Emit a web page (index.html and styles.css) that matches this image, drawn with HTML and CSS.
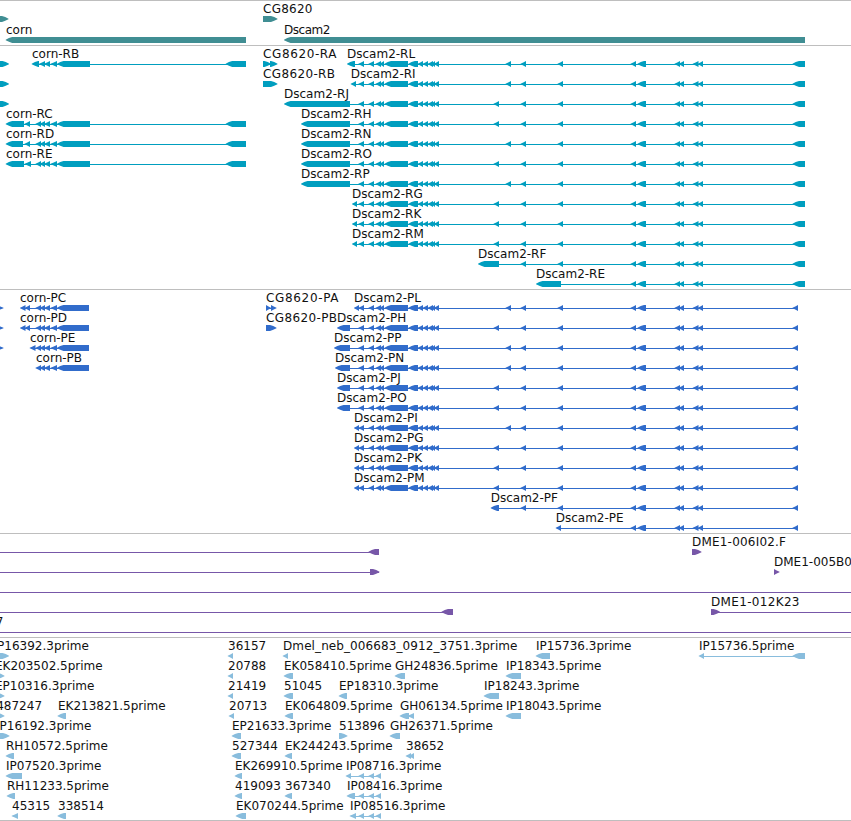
FILE: index.html
```html
<!DOCTYPE html>
<html lang="en">
<head>
<meta charset="utf-8">
<title>Genome browser</title>
<link rel="stylesheet" href="styles.css">
</head>
<body>
<main class="browser">
<section class="track track-gene" id="gene"></section>
<section class="track track-transcript" id="transcript"></section>
<section class="track track-protein" id="protein"></section>
<section class="track track-bac" id="bac"></section>
<section class="track track-est" id="est"></section>
</main>
<script src="tracks.js"></script>
</body>
</html>
```
FILE: styles.css
```css
body {
  margin: 0;
  background: #fff;
  overflow: hidden;
}

.browser {
  display: flex;
  flex-direction: column;
  width: 851px;
  box-sizing: border-box;
  border-bottom: 1px solid #bebebe;
}

.track {
  box-sizing: border-box;
  border-top: 1px solid #bebebe;
  overflow: hidden;
}

.track svg {
  display: block;
  width: 851px;
  height: 100%;
}

.track text {
  font-family: "DejaVu Sans", sans-serif;
  font-size: 12px;
  fill: #111;
}

.track-gene { height: 45px; color: #408e93; }
.track-transcript { height: 244px; color: #009ebf; }
.track-protein { height: 244px; color: #316ccb; }
.track-bac { height: 104px; color: #7757a8; }
.track-est { height: 183px; color: #89bddd; }

.exon { fill: currentColor; }
.intron { fill: currentColor; shape-rendering: crispEdges; }
```
FILE: tracks.js
```js
// Feature: [row, label, label x, exons, direction, span]
// Exons are [start, end] pairs; the span overrides the line's extent.
const NS = "http://www.w3.org/2000/svg";
const core = [[358.3,364],[368.4,374],[375.5,381],[379.5,384],[384.5,408],[408.3,418],[417.5,423],[422.5,428],[427.5,433],[431,435],[433.8,439]];
const A = [505.5,511], B = [493.5,499];
const mid = [[520.5,526],[557.5,563]];
const tail = [[630.5,636],[637.5,646],[674.5,680],[678.5,684],[692.7,698.5],[697.7,703]];
const endR = [792.5,805], endP = [792.5,798];
const dscam = (first, variant, last) => [first, ...core, variant, ...mid, ...tail, last];
const cornMid = [[35.5,41],[39.5,45],[44,50],[50.5,57],[57,90]];
const cornP = [...cornMid.slice(0,4),[57,89]];
const ip = [[358.5,364],[368.5,374],[375.5,381]];

const transcripts = [
  [0,"",0,[[-6,9]],"r"],[1,"",0,[[-6,9]],"r"],[2,"",0,[[-6,9]],"r"],
  [0,"corn-RB",32,[[31.7,39],[39,45],[44,50],[50.5,57],[57,90],[225.7,246]]],
  [3,"corn-RC",6,[[5.7,24],[24.5,30],...cornMid,[225.7,246]]],
  [4,"corn-RD",6,[[5.7,23],[24.5,30],...cornMid,[225.7,246]]],
  [5,"corn-RE",6,[[5.7,24],[24.5,31],...cornMid,[225.7,246]]],
  [0,"CG8620-RA",263,[[263,271],[270,277.5]],"r"],
  [1,"CG8620-RB",263,[[263,277.5]],"r"],
  [10,"Dscam2-RF",478,[[478,499],...mid,...tail,endR]],
  [11,"Dscam2-RE",536,[[536,561],...tail,endR]]
];
[["RL",347,355,A],["RI",350.7,356,A],["RJ",284,350,B],["RH",301,350,B],["RN",301,350,A],["RO",301,350,B],["RP",301,350,A],["RG",352,357,B],["RK",352,357,B],["RM",352,357,B]]
  .forEach(([n,s,e,v],i) => transcripts.push([i,"Dscam2-"+n,s,dscam([s,e],v,endR)]));

const proteins = [
  [0,"",0,[[-3,3.5]],"r"],[1,"",0,[[-3,3.5]],"r"],[2,"",0,[[-3,3.5]],"r"],
  [0,"corn-PC",20,[[20,25.5],[24.7,30],...cornP]],
  [1,"corn-PD",20,[[20,25.5],[24.7,30],...cornP]],
  [2,"corn-PE",30,[[29.7,35.5],...cornP]],
  [3,"corn-PB",36,cornP],
  [0,"CG8620-PA",266,[[266,271],[271,276.5]],"r"],
  [1,"CG8620-PB",266,[[266,276.5]],"r"],
  [10,"Dscam2-PF",490.7,[[490.7,499],...mid,...tail,endP]],
  [11,"Dscam2-PE",555.7,[[555.7,561],...tail,endP]]
];
[["PL",354,359,A],["PH",337,350,B],["PP",334,350,A],["PN",335,350,A],["PJ",337,350,B],["PO",337,350,B],["PI",354,359,A],["PG",354,359,B],["PK",354,359,B],["PM",354,359,B]]
  .forEach(([n,s,e,v],i) => proteins.push([i,"Dscam2-"+n,s,dscam([s,e],v,endP)]));

const tracks = {
  gene: [
    [0,"",0,[[-6,8.5]],"r"],
    [1,"corn",6,[[5.7,246]]],
    [0,"CG8620",263,[[263,277.5]],"r"],
    [1,"Dscam2",284,[[284,805]]]
  ],
  transcript: transcripts,
  protein: proteins,
  bac: [
    [0,"",0,[[368.5,379]],"l",[0,379]],
    [1,"",0,[[370,379.5]],"r",[0,379]],
    [2,"",0,[],"l",[0,851]],
    [3,"",0,[[441.5,453]],"l",[0,453]],
    [4,"7",-4.3,[],"l",[0,851]],
    [0,"DME1-006I02.F",692,[[692,701.5]],"r"],
    [1,"DME1-005B04",774,[[774,779.5]],"r"],
    [3,"DME1-012K23",711,[[711,720]],"r",[711,851]]
  ],
  est: [
    [0,"IP16392.3prime",-6.5,[[-6,9]],"r"],
    [0,"36157",228,[[227.7,233]]],
    [0,"Dmel_neb_006683_0912_3751.3prime",283,[[282.7,288]]],
    [0,"IP15736.3prime",536,[[535.7,550]]],
    [0,"IP15736.5prime",699,[[698.7,704],[792.5,805]]],
    [1,"EK203502.5prime",-5,[[-3,4.5]],"r"],
    [1,"20788",228,[[227.7,233]]],
    [1,"EK058410.5prime",284,[[283.7,293]]],
    [1,"GH24836.5prime",395,[[394.7,405]]],
    [1,"IP18343.5prime",506,[[505.7,521]]],
    [2,"EP10316.3prime",-5,[[-3,4.5]],"r"],
    [2,"21419",228,[[227.7,233]]],
    [2,"51045",284,[[283.7,293]]],
    [2,"EP18310.3prime",339,[[338.7,347]]],
    [2,"IP18243.3prime",484,[[483.7,499]]],
    [3,"487247",-3.8,[[-3,4.5]],"r"],
    [3,"EK213821.5prime",58,[[57.5,66]]],
    [3,"20713",229,[[228.7,234]]],
    [3,"EK064809.5prime",285,[[284.7,293]]],
    [3,"GH06134.5prime",400,[[399.7,409],[407.5,414]]],
    [3,"IP18043.5prime",506,[[505.7,521]]],
    [4,"IP16192.3prime",-4,[[-6,9.5]],"r"],
    [4,"EP21633.3prime",232,[[231.7,241]]],
    [4,"513896",339,[[339,347.5]],"r"],
    [4,"GH26371.5prime",390,[[389.7,400]]],
    [5,"RH10572.5prime",6,[[5.7,14]]],
    [5,"527344",232,[[231.7,241]]],
    [5,"EK244243.5prime",285,[[284.7,292]]],
    [5,"38652",406,[[405.7,411],[408.5,414]]],
    [6,"IP07520.3prime",6,[[5.7,22]]],
    [6,"EK269910.5prime",235,[[234.7,242]]],
    [6,"IP08716.3prime",346,[[345.7,351],...ip]],
    [7,"RH11233.5prime",7,[[6.7,15]]],
    [7,"419093",235,[[234.7,242]]],
    [7,"367340",285,[[284.7,292]]],
    [7,"IP08416.3prime",347,[[346.7,355],...ip]],
    [8,"45315",12,[[11.7,18]]],
    [8,"338514",58,[[57.5,66]]],
    [8,"EK070244.5prime",236,[[235.7,246]]],
    [8,"IP08516.3prime",350,[[349.7,356],...ip]]
  ]
};

// Label advance widths that differ from the font's natural width.
const widths = {
  "CG8620": 49.5, "CG8620-RA": 73.5, "CG8620-RB": 72, "CG8620-PA": 72.5, "CG8620-PB": 71,
  "Dscam2": 46.5, "Dmel_neb_006683_0912_3751.3prime": 234.5, "DME1-006I02.F": 94,
  "DME1-012K23": 88.5
};

function add(parent, tag, attrs, text) {
  const el = document.createElementNS(NS, tag);
  for (const k in attrs) el.setAttribute(k, attrs[k]);
  if (text) el.textContent = text;
  parent.appendChild(el);
}

function exonPath(s, e, dir, top) {
  const head = Math.min(e - s, 6.5);
  const tip = dir === "r" ? e : s, back = dir === "r" ? s : e, k = dir === "r" ? -1 : 1;
  const shoulder = tip + k * head, bend = tip + k * head * 0.5;
  const ease = e - s > 6.5 ? 1.2 : 1.6;
  return `M${tip} ${top + 2.8}L${bend} ${top + ease - 0.2}L${shoulder} ${top}H${back}V${top + 6}H${shoulder}L${bend} ${top + 6 - ease}L${tip} ${top + 3.2}Z`;
}

for (const name in tracks) {
  const svg = document.createElementNS(NS, "svg");
  const pitch = name === "gene" ? 21 : 20;
  for (const [row, label, x, exons, dir = "l", span] of tracks[name]) {
    const y = row * pitch;
    const range = span || [exons[0][0] + 3, exons[exons.length - 1][1] - 2];
    if (span || exons.length > 1)
      add(svg, "rect", { class: "intron", x: range[0], y: y + 18, width: range[1] - range[0], height: 1 });
    for (const [s, e] of exons) add(svg, "path", { class: "exon", d: exonPath(s, e, dir, y + 15) });
    if (label) {
      const attrs = { x, y: y + 12 };
      if (widths[label]) attrs.textLength = widths[label];
      add(svg, "text", attrs, label);
    }
  }
  document.getElementById(name).appendChild(svg);
}
```
